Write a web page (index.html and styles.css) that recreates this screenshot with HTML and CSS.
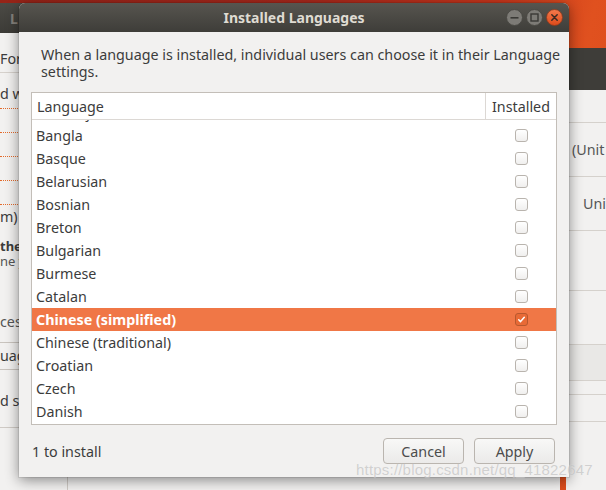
FILE: index.html
```html
<!DOCTYPE html>
<html>
<head>
<meta charset="utf-8">
<link rel="stylesheet" href="styles.css">
</head>
<body>
<div class="desk">
  <div class="win-left">
    <div class="lw-title">L</div>
    <div class="lw-tab">For</div>
    <div class="lw-line">d w</div>
    <div class="lw-list">
      <div class="lw-row"></div>
      <div class="lw-row"></div>
      <div class="lw-row"></div>
      <div class="lw-row"></div>
      <div class="lw-row lw-row-text">m)</div>
    </div>
    <div class="lw-note"><b>the</b><span>ne y</span></div>
    <div class="lw-line lw-ces">ces</div>
    <div class="lw-box">uag</div>
    <div class="lw-line lw-sys">d sy</div>
    <div class="lw-rule"></div>
    <div class="lw-bottom"><div class="lw-btn"></div></div>
  </div>

  <div class="win-right">
    <div class="rw-head"></div>
    <div class="rw-row rw-r1"></div>
    <div class="rw-row rw-r2">(Unit</div>
    <div class="rw-row rw-r3">Unit</div>
    <div class="rw-row rw-r4"></div>
    <div class="rw-row rw-r5"></div>
    <div class="rw-row rw-r6"></div>
    <div class="rw-row rw-r7"></div>
    <div class="rw-row rw-r8"></div>
  </div>

  <div class="dialog">
    <div class="dtitle">
      <span></span>
      <span class="dtitle-text">Installed Languages</span>
      <span class="wbtns">
        <svg class="wb" viewBox="0 0 17 17"><circle cx="8.5" cy="8.5" r="8" fill="#7d7b76" stroke="#4a4944" stroke-width="1"/><rect x="4.5" y="8" width="8" height="1.6" fill="#3a3935"/></svg>
        <svg class="wb" viewBox="0 0 17 17"><circle cx="8.5" cy="8.5" r="8" fill="#7d7b76" stroke="#4a4944" stroke-width="1"/><rect x="5" y="5" width="7" height="7" fill="none" stroke="#3a3935" stroke-width="1.4"/></svg>
        <svg class="wb" viewBox="0 0 17 17"><defs><linearGradient id="cg" x1="0" y1="0" x2="0" y2="1"><stop offset="0" stop-color="#f47a4c"/><stop offset="1" stop-color="#dd4a1a"/></linearGradient></defs><circle cx="8.5" cy="8.5" r="8" fill="url(#cg)" stroke="#8a3a1e" stroke-width="0.8"/><path d="M5.8 5.8 L11.2 11.2 M11.2 5.8 L5.8 11.2" stroke="#3a2a22" stroke-width="1.5" stroke-linecap="round"/></svg>
      </span>
    </div>
    <div class="desc">When a language is installed, individual users can choose it in their Language settings.</div>
    <div class="list">
      <div class="lhead">
        <div class="lh-lang">Language</div>
        <div class="lh-inst">Installed</div>
      </div>
      <div class="lbody">
        <div class="rows">
          <div class="row"><span class="name">Azerbaijani</span><span class="cell"><span class="cb"></span></span></div>
          <div class="row"><span class="name">Bangla</span><span class="cell"><span class="cb"></span></span></div>
          <div class="row"><span class="name">Basque</span><span class="cell"><span class="cb"></span></span></div>
          <div class="row"><span class="name">Belarusian</span><span class="cell"><span class="cb"></span></span></div>
          <div class="row"><span class="name">Bosnian</span><span class="cell"><span class="cb"></span></span></div>
          <div class="row"><span class="name">Breton</span><span class="cell"><span class="cb"></span></span></div>
          <div class="row"><span class="name">Bulgarian</span><span class="cell"><span class="cb"></span></span></div>
          <div class="row"><span class="name">Burmese</span><span class="cell"><span class="cb"></span></span></div>
          <div class="row"><span class="name">Catalan</span><span class="cell"><span class="cb"></span></span></div>
          <div class="row sel"><span class="name">Chinese (simplified)</span><span class="cell"><span class="cb on"><svg viewBox="0 0 13 13"><path d="M3.2 6.8 L5.4 9 L9.8 3.8" fill="none" stroke="#fff" stroke-width="1.8" stroke-linecap="round" stroke-linejoin="round"/></svg></span></span></div>
          <div class="row"><span class="name">Chinese (traditional)</span><span class="cell"><span class="cb"></span></span></div>
          <div class="row"><span class="name">Croatian</span><span class="cell"><span class="cb"></span></span></div>
          <div class="row"><span class="name">Czech</span><span class="cell"><span class="cb"></span></span></div>
          <div class="row"><span class="name">Danish</span><span class="cell"><span class="cb"></span></span></div>
        </div>
      </div>
    </div>
    <div class="footer">
      <span class="count">1 to install</span>
      <button class="btn">Cancel</button>
      <button class="btn">Apply</button>
    </div>
  </div>

  <div class="watermark">https://blog.csdn.net/qq_41822647</div>
</div>
</body>
</html>
```

FILE: styles.css
```css
* { box-sizing: border-box; }
html, body { margin: 0; padding: 0; }
body {
  width: 606px;
  height: 490px;
  overflow: hidden;
  font-family: "Noto Sans", "DejaVu Sans", sans-serif;
  color: #3c3c3c;
}
.desk {
  position: relative;
  width: 606px;
  height: 490px;
  overflow: hidden;
  background: linear-gradient(100deg, #962418 0%, #a8281c 45%, #c8361c 72%, #e0511f 86%, #db4a1b 100%);
}

/* background window left */
.win-left {
  position: absolute;
  left: 0;
  top: 3px;
  width: 560px;
  bottom: 0;
  background: #f2f1f0;
  display: flex;
  flex-direction: column;
  font-size: 14.3px;
  white-space: nowrap;
}
.lw-title {
  height: 30px;
  flex: none;
  background: linear-gradient(#4b4a45, #3c3b37);
  color: #85827c;
  font-weight: bold;
  font-size: 14px;
  padding-left: 10px;
  display: flex;
  align-items: center;
}
.lw-tab {
  height: 40px;
  flex: none;
  display: flex;
  align-items: flex-end;
  padding-bottom: 5px;
  line-height: 17px;
  border-bottom: 1px solid #d6d1cc;
}
.lw-line {
  line-height: 17px;
  margin-top: 12px;
}
.lw-list { margin-top: 6px; }
.lw-row {
  height: 24px;
  border-top: 1px dotted #e46b2c;
  line-height: 23px;
}
.lw-note {
  margin-top: 11px;
  font-size: 13px;
  line-height: 15px;
  display: flex;
  flex-direction: column;
}
.lw-note span { color: #555; }
.lw-ces { margin-top: 44px; color: #555; }
.lw-box {
  margin-top: 12px;
  height: 28px;
  border-top: 1px solid #c9c4be;
  border-bottom: 1px solid #c9c4be;
  line-height: 26px;
}
.lw-sys { margin-top: 22px; }
.lw-rule {
  margin-top: 18px;
  border-top: 1px solid #cfcac5;
}
.lw-bottom { flex: 1; }
.lw-btn {
  margin-left: 67px;
  margin-top: 47px;
  height: 20px;
  border-left: 1px solid #cfcac5;
}

/* background window right */
.win-right {
  position: absolute;
  left: 566px;
  top: 48px;
  right: 0;
  bottom: 0;
  background: #f2f1f0;
  font-size: 14.3px;
  color: #555;
  white-space: nowrap;
}
.rw-head { height: 42px; background: #3e3d39; }
.rw-row { border-bottom: 1px solid #d5d1cc; padding-left: 6px; display: flex; align-items: center; }
.rw-r1 { height: 33px; }
.rw-r2 { height: 54px; }
.rw-r3 { height: 54px; padding-left: 17px; }
.rw-r4 { height: 60px; }
.rw-r5 { height: 54px; }
.rw-r6 { height: 36px; background: #e9e8e6; }
.rw-r7 { height: 14px; }
.rw-r8 { height: 27px; }

/* dialog */
.dialog {
  position: absolute;
  left: 19px;
  top: 3px;
  width: 550px;
  height: 474px;
  background: #f2f1f0;
  border-radius: 6px 6px 0 0;
  box-shadow: 0 3px 14px rgba(0, 0, 0, 0.45), 0 0 0 1px rgba(0, 0, 0, 0.08);
  display: flex;
  flex-direction: column;
  overflow: hidden;
}
.dtitle {
  height: 29px;
  flex: none;
  background: linear-gradient(#57554f, #3e3d39);
  display: grid;
  grid-template-columns: 1fr auto 1fr;
  align-items: center;
}
.dtitle-text {
  color: #dfdbd2;
  font-weight: bold;
  font-size: 14px;
}
.wbtns {
  justify-self: end;
  display: flex;
  gap: 3px;
  padding-right: 6px;
}
.wb { width: 17px; height: 17px; display: block; }

.desc {
  padding: 14px 8px 0 22px;
  font-size: 14.3px;
  line-height: 17px;
  color: #3c3c3c;
}
.list {
  margin: 12px 12px 0 12px;
  border: 1px solid #c3beb8;
  background: #fff;
  flex: none;
}
.lhead {
  display: grid;
  grid-template-columns: 1fr 71px;
  height: 27px;
  border-bottom: 1px solid #dcd8d4;
  font-size: 14.3px;
}
.lh-lang { padding-left: 5px; display: flex; align-items: center; }
.lh-inst {
  border-left: 1px solid #dcd8d4;
  display: flex;
  align-items: center;
  justify-content: center;
}
.lbody {
  height: 304px;
  overflow: hidden;
}
.rows { margin-top: -19px; }
.row {
  height: 23px;
  display: grid;
  grid-template-columns: 1fr 71px;
  align-items: center;
  font-size: 14.3px;
}
.row .name { padding-left: 4px; }
.row .cell { display: flex; justify-content: center; padding-left: 1px; }
.row.sel { background: #f07746; color: #fff; font-weight: bold; }
.cb {
  width: 13px;
  height: 13px;
  border: 1px solid #b9b4ae;
  border-radius: 3px;
  background: linear-gradient(#ffffff, #f0efee);
  display: block;
}
.cb.on {
  background: #e86a36;
  border-color: #b8582e;
}
.cb svg { width: 11px; height: 11px; display: block; }

.footer {
  margin-top: 13px;
  height: 26px;
  display: flex;
  align-items: center;
  gap: 10px;
  padding: 0 14px 0 13px;
  font-size: 14.3px;
}
.count { flex: 1; }
.btn {
  width: 81px;
  height: 26px;
  border: 1px solid #bab5af;
  border-radius: 4px;
  background: linear-gradient(#f8f8f7, #ebeae9);
  font-family: inherit;
  font-size: 14.3px;
  color: #4c4c4c;
  padding: 0;
}

.watermark {
  position: absolute;
  left: 356px;
  top: 461px;
  font-family: "Liberation Sans", Arial, sans-serif;
  font-size: 15px;
  color: rgba(175, 175, 175, 0.55);
  text-shadow: 0 0 1px rgba(255, 255, 255, 0.5);
  white-space: nowrap;
  letter-spacing: 0.2px;
}
```
